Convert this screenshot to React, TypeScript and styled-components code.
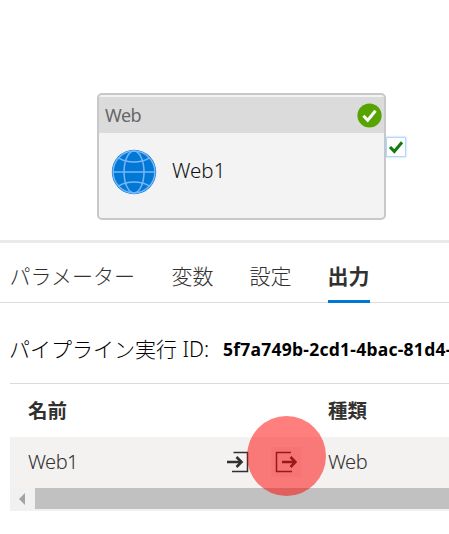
import React from "react";
import styled, { createGlobalStyle } from "styled-components";

const GlobalStyle = createGlobalStyle`
  body {
    margin: 0;
    background: #fff;
    overflow: hidden;
  }
  * { box-sizing: border-box; }
`;

const Page = styled.main`
  width: 449px;
  height: 534px;
  display: flex;
  flex-direction: column;
  overflow: hidden;
  background: #fff;
  color: #323130;
  font-family: "Noto Sans", "Noto Sans CJK JP", sans-serif;
  white-space: nowrap;
`;

const Canvas = styled.section`
  height: 243px;
  flex: none;
  padding: 93px 0 0 97px;
  border-bottom: 3px solid #eaeaea;
`;

const Activity = styled.article`
  position: relative;
  width: 289px;
  height: 127px;
  padding-top: 2px;
  border: 2px solid #c8c8c8;
  border-radius: 5px;
  background: #f3f3f3;
`;

const ActivityHeader = styled.header`
  height: 36px;
  display: flex;
  align-items: center;
  justify-content: space-between;
  padding: 0 2px 0 6px;
  background: #dbdbdb;
`;

const ActivityType = styled.span`
  color: #666;
  font-size: 18px;
  font-weight: 400;
  letter-spacing: -0.5px;
  line-height: 36px;
`;

const ActivityBody = styled.div`
  height: 78px;
  display: flex;
  align-items: center;
  gap: 15px;
  padding-left: 12px;
`;

const ActivityName = styled.span`
  color: #111;
  font-size: 20.5px;
  font-weight: 350;
  letter-spacing: 0;
  line-height: 28px;
  margin-top: -4px;
`;

const SuccessPort = styled.span`
  position: absolute;
  left: 287px;
  top: 42px;
  width: 20px;
  height: 20px;
  display: grid;
  place-items: center;
  background: #fff;
  border: 1px solid #b4d8f7;
  box-shadow: 0 0 2px #9bcdf8;
`;

const Tabs = styled.nav`
  height: 60px;
  flex: none;
  display: flex;
  gap: 36px;
  padding-left: 10px;
  box-shadow: inset 0 -1px #dedede;
`;

const Tab = styled.span<{ $active?: boolean; $width: number }>`
  width: ${(p) => p.$width}px;
  height: 60px;
  padding-top: 17px;
  border-bottom: 3px solid ${(p) => (p.$active ? "#0078d4" : "transparent")};
  font-size: 21px;
  line-height: 32px;
  font-weight: ${(p) => (p.$active ? 700 : 300)};
  text-indent: -0.4px;
`;

const RunInfo = styled.div`
  height: 80px;
  flex: none;
  display: flex;
  align-items: center;
  padding: 11px 0 0 9px;
  color: #000;
  line-height: 32px;
`;

const RunLabel = styled.span`
  width: 214px;
  flex: none;
  font-size: 21px;
  font-weight: 300;
  letter-spacing: 0;
`;

const RunId = styled.span`
  flex: none;
  font-size: 17.5px;
  font-weight: 700;
  letter-spacing: 0.25px;
`;

const Table = styled.section`
  margin-left: 10px;
  border-top: 1px solid #dadada;
`;

const TableRow = styled.div<{ $head?: boolean }>`
  height: ${(p) => (p.$head ? 53 : 51)}px;
  display: grid;
  grid-template-columns: 190px 110px 1fr;
  align-items: center;
  padding: 0 0 ${(p) => (p.$head ? 0 : 2)}px 18px;
  background: ${(p) => (p.$head ? "#fff" : "#f3f2f1")};
  font-size: ${(p) => (p.$head ? 19.5 : 20)}px;
  letter-spacing: ${(p) => (p.$head ? 0 : -0.5)}px;
  font-weight: ${(p) => (p.$head ? 700 : 350)};
  line-height: 28px;
`;

const Actions = styled.div`
  display: flex;
  gap: 18px;
  padding-left: 5px;
`;

const ActionButton = styled.button<{ $marked?: boolean }>`
  position: relative;
  width: 30px;
  height: 30px;
  display: grid;
  place-items: center;
  padding: 0;
  border: 0;
  background: ${(p) => (p.$marked ? "#edebe9" : "transparent")};
`;

const Highlight = styled.i`
  position: absolute;
  z-index: 2;
  left: -24px;
  top: -31px;
  width: 79px;
  height: 80px;
  border-radius: 50%;
  background: rgba(255, 0, 0, 0.5);
`;

const Scrollbar = styled.div`
  height: 23px;
  display: flex;
  align-items: flex-start;
  padding-left: 9px;
  gap: 10px;
  background: #f1f1f1;
`;

const ScrollArrow = styled.svg`
  margin-top: 5px;
`;

const Thumb = styled.div`
  flex: 1;
  height: 21px;
  background: #c1c1c1;
`;

const GlobeIcon = () => (
  <svg width="46" height="46" viewBox="0 0 46 46" fill="none">
    <circle cx="23" cy="23" r="22.2" fill="#0078d4" />
    <g stroke="#78b6fa" strokeWidth="1.5">
      <circle cx="23" cy="23" r="20.9" />
      <ellipse cx="23" cy="23" rx="10" ry="20.9" />
      <path d="M2 23h42M8 9.200c8 5.200 22 5.200 30 0M8 36.800c8-5.200 22-5.200 30 0" />
    </g>
  </svg>
);

const StatusIcon = () => (
  <svg width="25" height="25" viewBox="0 0 25 25" fill="none">
    <circle cx="12.500" cy="12.500" r="12.100" fill="#57a300" />
    <path d="m6.400 12.800 4.300 4.400 7.800-9.400" stroke="#fff" strokeWidth="3" />
  </svg>
);

const CheckIcon = () => (
  <svg width="16" height="16" viewBox="0 0 16 16" fill="none">
    <path d="m2 8 4.300 4.400L14 3.300" stroke="#107c10" strokeWidth="3" />
  </svg>
);

const TransferIcon = ({ output = false }: { output?: boolean }) => (
  <svg width="22" height="22" viewBox="0 0 22 22" fill="none" stroke="#323130">
    <path
      d={output ? "M16 1.500H1.500v19H17" : "M6.500 1.500h14v19H5"}
      strokeWidth="1.500"
    />
    <path
      d={output ? "M7 11h13M15.500 6l5 5-5 5" : "M0 11h13M9.500 6l5 5-5 5"}
      strokeWidth="2.600"
    />
  </svg>
);

export default function App() {
  return (
    <Page>
      <GlobalStyle />
      <Canvas>
        <Activity>
          <ActivityHeader>
            <ActivityType>Web</ActivityType>
            <StatusIcon />
          </ActivityHeader>
          <ActivityBody>
            <GlobeIcon />
            <ActivityName>Web1</ActivityName>
          </ActivityBody>
          <SuccessPort><CheckIcon /></SuccessPort>
        </Activity>
      </Canvas>
      <Tabs>
        <Tab $width={126}>パラメーター</Tab>
        <Tab $width={42}>変数</Tab>
        <Tab $width={42}>設定</Tab>
        <Tab $width={42} $active>出力</Tab>
      </Tabs>
      <RunInfo>
        <RunLabel>パイプライン実行 ID:</RunLabel>
        <RunId>5f7a749b-2cd1-4bac-81d4-</RunId>
      </RunInfo>
      <Table>
        <TableRow $head>
          <span>名前</span>
          <span />
          <span>種類</span>
        </TableRow>
        <TableRow>
          <span>Web1</span>
          <Actions>
            <ActionButton aria-label="入力"><TransferIcon /></ActionButton>
            <ActionButton aria-label="出力" $marked>
              <TransferIcon output />
              <Highlight />
            </ActionButton>
          </Actions>
          <span>Web</span>
        </TableRow>
        <Scrollbar>
          <ScrollArrow width="6" height="12" viewBox="0 0 6 12">
            <path d="M6 0v12L0 6z" fill="#a3a3a3" />
          </ScrollArrow>
          <Thumb />
        </Scrollbar>
      </Table>
    </Page>
  );
}
